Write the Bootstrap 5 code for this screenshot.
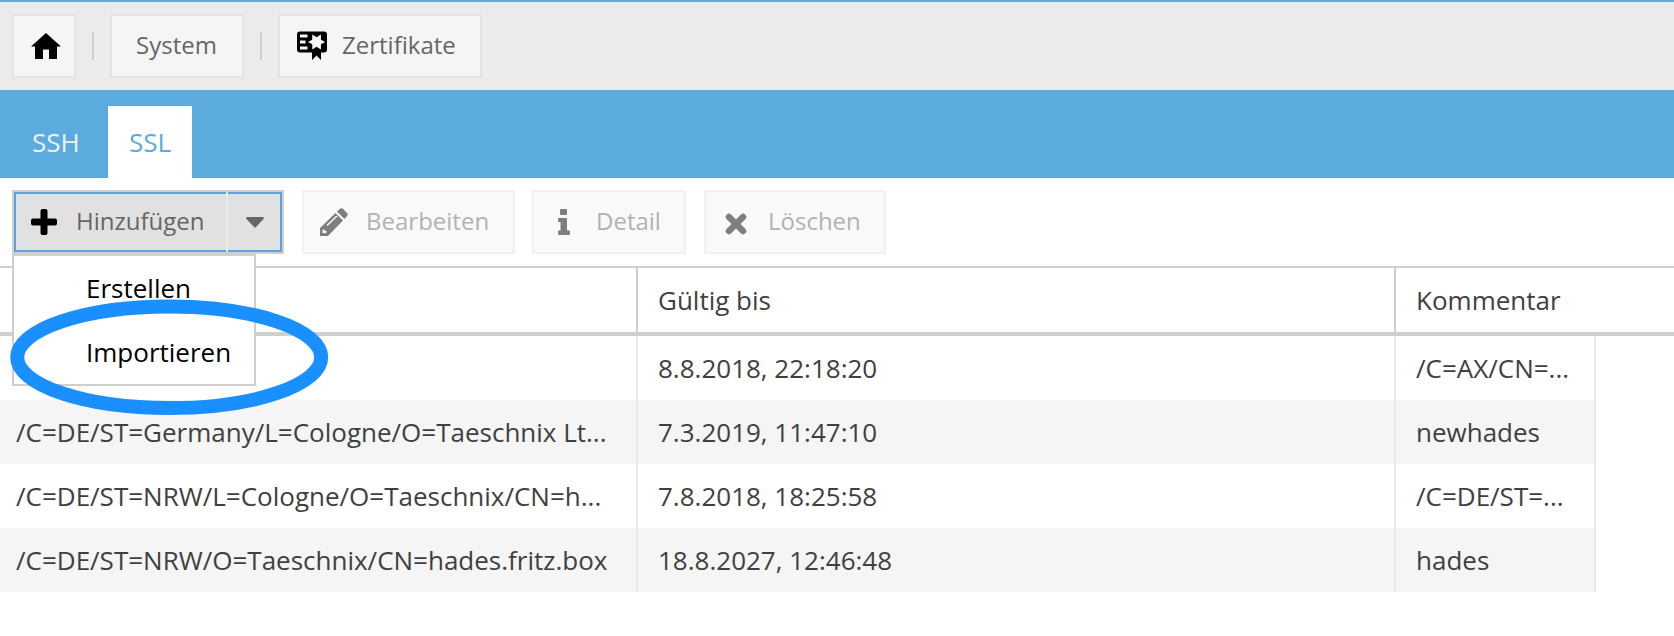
<!DOCTYPE html>
<html lang="de">
<head>
<meta charset="utf-8">
<title>Zertifikate</title>
<link href="https://cdn.jsdelivr.net/npm/bootstrap@5.3.0/dist/css/bootstrap.min.css" rel="stylesheet">
<script src="https://cdn.jsdelivr.net/npm/bootstrap@5.3.0/dist/js/bootstrap.bundle.min.js"></script>
<style>
body{font-family:"Open Sans",sans-serif;color:#404040;background:#fff;overflow:hidden}
svg{display:block;flex:none}
.crumbs{height:90px;background:#ebebeb;border-top:2px solid #5cabdf;padding:12px 12px 0}
.tool{--bs-btn-border-radius:0;height:64px;border:2px solid #e4e4e4;border-radius:0;background:#f5f5f5;color:#666;font-size:24px;line-height:60px;padding:0;display:flex;align-items:center;position:relative;flex:none}
.tool:disabled{opacity:.5;border-color:#e4e4e4;background:#f5f5f5;color:#666}
.tool:disabled svg{color:#000}
.tool svg{color:#000}
.tool>span{margin-top:-2px}
.divider{width:2px;height:28px;background:#cfcfcf;margin:18px 16px 0}
.tabs{height:88px;background:#5cabdf;padding:16px 0 0 12px;gap:8px}
.tabs .nav-link{height:72px;border-radius:0;font-size:26px;line-height:72px;padding:0 0 0 20px;width:88px;color:#f0f0f0}
.tabs .nav-link.active{width:84px;padding-left:21px;background:#fff;color:#5cabdf}
.actions{height:88px;padding:12px 12px 0}
.split{width:272px;height:64px;border:2px solid #cfcfcf}
.split .tool{height:60px;background:#e1e1e1;border:2px solid #5fa2dd;line-height:56px}
.split .main{width:212px;border-right:0}
.split .more{width:54px;border-left:0;margin-left:2px;padding-left:2px;justify-content:center}
.split .main::after{content:"";position:absolute;left:100%;top:-2px;width:2px;height:60px;background:#ebebeb}
.choices{display:block;position:absolute;left:12px;top:254px;width:244px;min-width:0;padding:0;margin:0;border:2px solid #cfcfcf;border-radius:0;background:#fff}
.choices .dropdown-item{height:64px;font-size:26px;line-height:64px;padding:0 0 0 72px;color:#000}
.certs{table-layout:fixed;width:1674px;border-top:2px solid #cfcfcf;margin:0;font-size:26px;border-collapse:separate;border-spacing:0;color:#404040}
.certs>:not(caption)>*>*{height:64px;line-height:64px;padding:0 20px;border:0 solid #e8e8e8;border-right-width:2px;overflow:hidden;white-space:nowrap;font-weight:400;background:none;color:#404040;box-shadow:none}
.certs>thead>tr>th{height:68px;border-color:#cfcfcf;border-bottom-width:4px}
.certs>:not(caption)>*>:first-child{padding-left:16px}
.certs>:not(caption)>*>:last-child{border-right:0}
.certs>tbody>tr:nth-child(even)>td:not(:last-child){background:#f5f5f5}
.ring{position:absolute;left:0;top:290px;z-index:1100;pointer-events:none}
</style>
</head>
<body>
<header class="crumbs d-flex align-items-start">
  <button class="btn tool" style="width:64px" aria-label="Start">
    <svg style="margin-left:17px" width="30" height="26" viewBox="0 0 30 26" fill="currentColor"><path d="M15 0 30 13.500H26V26H18V16.500H12V26H4V13.500H0Z"/></svg>
  </button>
  <span class="divider"></span>
  <button class="btn tool justify-content-center" style="width:134px;padding-right:1px"><span>System</span></button>
  <span class="divider"></span>
  <button class="btn tool" style="width:204px">
    <svg style="margin-left:17px" width="30" height="30" viewBox="0 0 30 30" fill="currentColor"><path fill-rule="evenodd" d="M3 .5H27Q30 .5 30 3.500V18.500Q30 21.500 27 21.500H24V29L19.500 24.500 15 29V21.500H3Q0 21.500 0 18.500V3.500Q0 .5 3 .5ZM3 3.500V6.500H10.500V3.500ZM3 9.500V12.500H8.500V9.500ZM3 15.500V18.500H10.500V15.500Z"/><path fill="#f5f5f5" d="M11 11 15.200 8.700 15.300 3.600 19.600 6.200 23.900 3.600 24 8.700 28.200 11 24 13.300 23.900 18.400 19.600 15.800 15.300 18.400 15.200 13.300Z"/></svg>
    <span style="margin-left:15px">Zertifikate</span>
  </button>
</header>

<nav class="tabs nav">
  <a class="nav-link" href="#">SSH</a>
  <a class="nav-link active" href="#">SSL</a>
</nav>

<div class="actions d-flex">
  <div class="split d-flex">
    <button class="btn tool main">
      <svg style="margin:-1px 0 0 15px" width="26" height="26" viewBox="0 0 26 26" fill="currentColor"><path d="M11.500 0h3Q16.500 0 16.500 2V9.500H24Q26 9.500 26 11.500V14.500Q26 16.500 24 16.500H16.500V24Q16.500 26 14.500 26H11.500Q9.500 26 9.500 24V16.500H2Q0 16.500 0 14.500V11.500Q0 9.500 2 9.500H9.500V2Q9.500 0 11.500 0Z"/></svg>
      <span style="margin-left:19px">Hinzufügen</span>
    </button>
    <button class="btn tool more" aria-label="Mehr">
      <svg style="color:#666;margin-top:1px" width="18" height="11" viewBox="0 0 18 11" fill="currentColor"><path d="M1 0H17Q18.500 .5 17.500 2L10 10Q9 11 8 10L.5 2Q-.5 .5 1 0Z"/></svg>
    </button>
  </div>
  <button class="btn tool" disabled style="width:213px;margin-left:18px">
    <svg style="margin-left:16px" width="28" height="28" viewBox="0 0 28 28" fill="currentColor"><path fill-rule="evenodd" d="M0 28V20L15.500 5 23 12.500 8 28ZM2.500 22V25H4.500V26L7 24 5.500 22.500H4V21ZM6.500 17 7.500 18 17.500 8.500 16.500 7.500ZM17 3.500 20 .8Q21.500-.5 23 .8L27 5Q28.500 6.500 27 8L24.500 11Z"/></svg>
    <span style="margin-left:18px">Bearbeiten</span>
  </button>
  <button class="btn tool" disabled style="width:154px;margin-left:17px">
    <svg style="margin:-1px 0 0 24px" width="12" height="26" viewBox="0 0 12 26" fill="currentColor"><path d="M3 0H8Q9 0 9 1V5Q9 6 8 6H3Q2 6 2 5V1Q2 0 3 0ZM1 9H8Q9 9 9 10V21.500H11Q12 21.500 12 22.500V25Q12 26 11 26H1Q0 26 0 25V22.500Q0 21.500 1 21.500H2.500V13H1Q0 13 0 12V10Q0 9 1 9Z"/></svg>
    <span style="margin-left:26px">Detail</span>
  </button>
  <button class="btn tool" disabled style="width:182px;margin-left:18px">
    <svg style="margin:3px 0 0 19px" width="22" height="22" viewBox="0 0 22 22" fill="none" stroke="currentColor" stroke-width="6.500" stroke-linecap="round"><path d="M4 4 18 18M18 4 4 18"/></svg>
    <span style="margin-left:21px">Löschen</span>
  </button>
</div>

<div class="dropdown-menu choices show">
  <a class="dropdown-item" href="#">Erstellen</a>
  <a class="dropdown-item" href="#">Importieren</a>
</div>

<table class="table certs">
  <colgroup><col style="width:638px"><col style="width:758px"><col style="width:200px"><col></colgroup>
  <thead><tr><th></th><th>Gültig bis</th><th colspan="2">Kommentar</th></tr></thead>
  <tbody>
    <tr><td></td><td>8.8.2018, 22:18:20</td><td>/C=AX/CN=...</td><td></td></tr>
    <tr><td>/C=DE/ST=Germany/L=Cologne/O=Taeschnix Lt...</td><td>7.3.2019, 11:47:10</td><td>newhades</td><td></td></tr>
    <tr><td>/C=DE/ST=NRW/L=Cologne/O=Taeschnix/CN=h...</td><td>7.8.2018, 18:25:58</td><td>/C=DE/ST=...</td><td></td></tr>
    <tr><td>/C=DE/ST=NRW/O=Taeschnix/CN=hades.fritz.box</td><td>18.8.2027, 12:46:48</td><td>hades</td><td></td></tr>
  </tbody>
</table>

<svg class="ring" width="340" height="130" viewBox="0 290 340 130" fill="none" stroke="#1a8fff" stroke-width="14"><ellipse cx="169.200" cy="357.300" rx="152" ry="50.800"/></svg>
</body>
</html>
